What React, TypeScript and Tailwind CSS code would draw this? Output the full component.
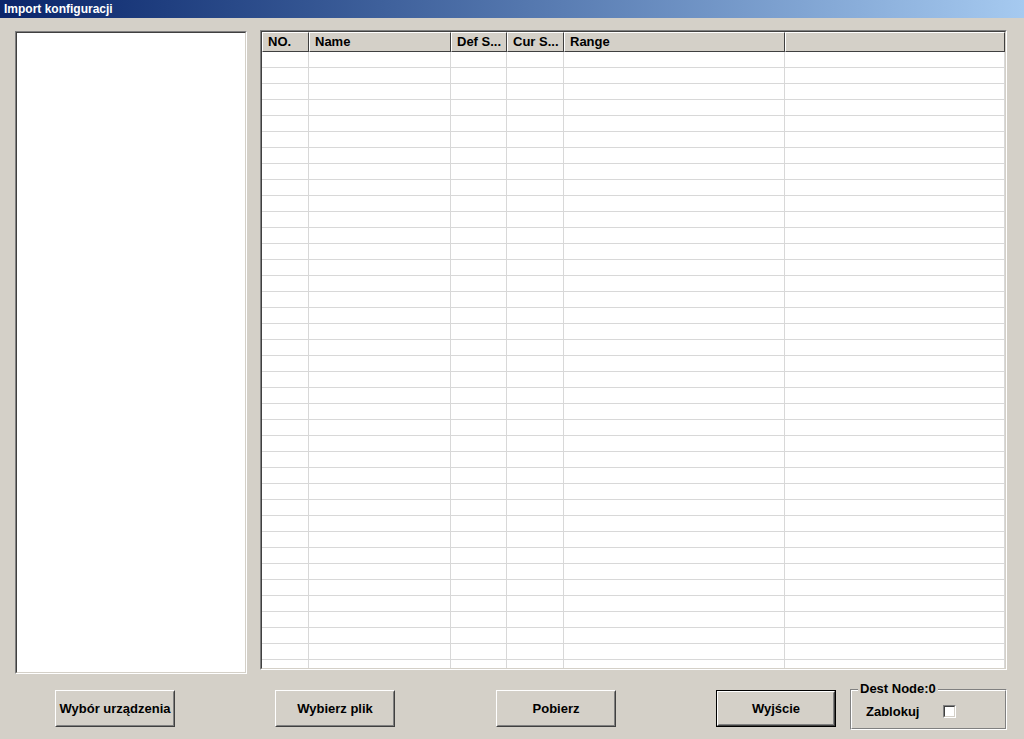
import React from "react";

const cols = [
  { w: 47, label: "NO." },
  { w: 142, label: "Name" },
  { w: 56, label: "Def S..." },
  { w: 57, label: "Cur S..." },
  { w: 221, label: "Range" },
  { w: 220, label: "" },
];

function Btn({ label, def }: { label: string; def?: boolean }) {
  const inner = (
    <div className="h-full w-full border border-t-white border-l-white border-b-[#404040] border-r-[#404040]">
      <div className="flex h-full w-full items-center justify-center whitespace-nowrap border border-t-[#d4d0c8] border-l-[#d4d0c8] border-b-[#808080] border-r-[#808080] text-[13px] font-bold text-black">
        {label}
      </div>
    </div>
  );
  if (def) {
    return <div className="h-[37px] w-[120px] border border-black">{inner}</div>;
  }
  return <div className="h-[37px] w-[120px]">{inner}</div>;
}

export default function App() {
  const rows = Array.from({ length: 39 });
  return (
    <div
      className="flex h-[739px] w-[1024px] flex-col overflow-hidden bg-[#d4d0c8]"
      style={{ fontFamily: '"Liberation Sans", Arial, sans-serif' }}
    >
      <div className="flex h-[18px] items-center bg-gradient-to-r from-[#0a246a] to-[#a6caf0] pl-[4px] text-[12px] font-bold text-white">
        Import konfiguracji
      </div>
      <div className="flex items-start pl-[15px] pt-[12px]">
        <div className="mt-[1px] h-[643px] w-[232px] border border-t-[#808080] border-l-[#808080] border-b-white border-r-white">
          <div className="h-full w-full border border-t-[#404040] border-l-[#404040] border-b-[#d4d0c8] border-r-[#d4d0c8] bg-white" />
        </div>
        <div className="ml-[13px] h-[640px] w-[747px] border border-t-[#808080] border-l-[#808080] border-b-white border-r-white">
          <div className="flex h-full w-full flex-col overflow-hidden border border-t-[#404040] border-l-[#404040] border-b-[#d4d0c8] border-r-[#d4d0c8] bg-white">
            <div className="flex h-[20px] shrink-0 bg-[#d4d0c8]">
              {cols.map((c, i) => (
                <div
                  key={i}
                  style={{ width: c.w }}
                  className="flex shrink-0 items-center overflow-hidden whitespace-nowrap border border-t-white border-l-white border-b-[#404040] border-r-[#404040] pl-[5px] text-[13px] font-bold text-black"
                >
                  {c.label}
                </div>
              ))}
            </div>
            {rows.map((_, r) => (
              <div key={r} className="flex h-[16px] shrink-0 border-b border-[#d8d8d8]">
                {cols.map((c, i) => (
                  <div key={i} style={{ width: c.w }} className="shrink-0 border-r border-[#d8d8d8]" />
                ))}
              </div>
            ))}
          </div>
        </div>
      </div>
      <div className="flex items-start pt-[15px]">
        <div className="ml-[55px] mt-[1px]">
          <Btn label="Wybór urządzenia" />
        </div>
        <div className="ml-[100px] mt-[1px]">
          <Btn label="Wybierz plik" />
        </div>
        <div className="ml-[101px] mt-[1px]">
          <Btn label="Pobierz" />
        </div>
        <div className="ml-[100px] mt-[1px]">
          <Btn label="Wyjście" def />
        </div>
        <div className="relative ml-[14px] h-[41px] w-[157px] border border-t-[#808080] border-l-[#808080] border-b-white border-r-white">
          <div className="h-full w-full border border-t-white border-l-white border-b-[#808080] border-r-[#808080]">
            <div className="flex h-full items-center pl-[14px] pt-[4px] text-[13px] font-bold text-black">
              <span>Zablokuj</span>
              <div className="ml-[24px] h-[13px] w-[13px] border border-t-[#808080] border-l-[#808080] border-b-white border-r-white">
                <div className="h-full w-full border border-t-[#404040] border-l-[#404040] border-b-[#d4d0c8] border-r-[#d4d0c8] bg-white" />
              </div>
            </div>
          </div>
          <div className="absolute left-[7px] top-[-9px] bg-[#d4d0c8] px-[2px] text-[13px] font-bold leading-[16px] text-black">
            Dest Node:0
          </div>
        </div>
      </div>
    </div>
  );
}
